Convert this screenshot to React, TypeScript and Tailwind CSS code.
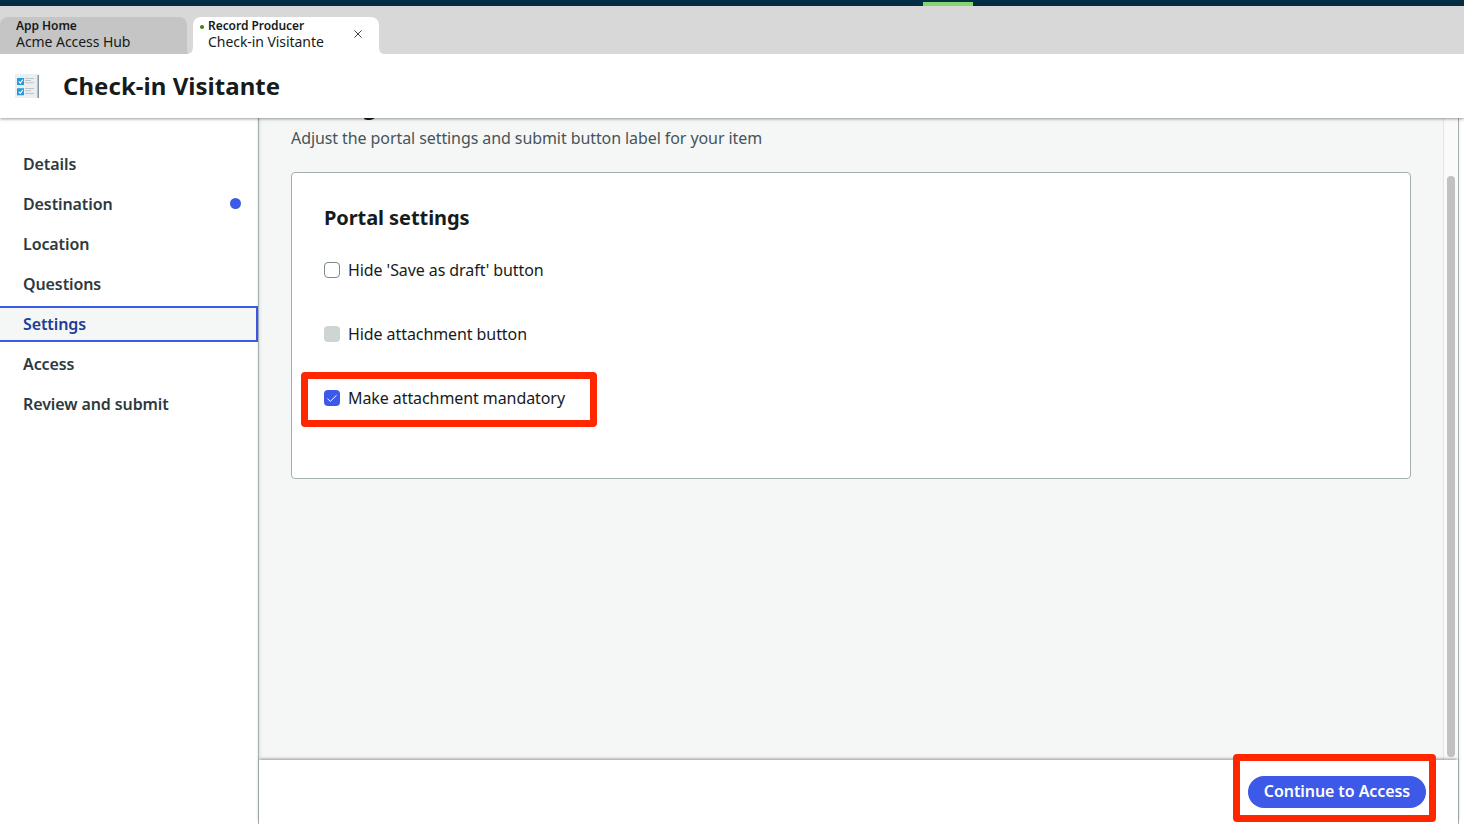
import React from "react";

const steps = ["Details", "Destination", "Location", "Questions", "Settings", "Access", "Review and submit"];

function ChecklistIcon() {
  return (
    <svg className="ml-[15px] h-6 w-6 shrink-0" viewBox="0 0 24 24" fill="none">
      <path d="M22 1h2v23H22z" fill="#8497a2" />
      <path d="M0 0h22v24H0z" fill="#e9eff2" />
      <path d="M22.3 0v24" stroke="#d5dfe4" strokeWidth=".7" />
      <path d="M2 4h7v7H2zM2 14.2h7v7H2z" fill="#209bdc" />
      <path d="M3.7 7.3l1.6 1.8 2.6-3.5M3.7 17.6l1.6 1.8 2.6-3.5" stroke="#fff" strokeWidth="1.1" />
      <path d="M10 4.5h9M10 6.5h6M10 8.8h9M10 14.5h9M10 16.7h6M10 19.5h9" stroke="#bfc4c7" strokeWidth="1.1" />
    </svg>
  );
}

function Option({ label, kind }: { label: string; kind: "empty" | "disabled" | "checked" }) {
  return (
    <label className="flex h-6 items-center gap-2 text-[16px] leading-6 tracking-[-0.08px] text-[#161b1c]">
      {kind === "empty" && <span className="h-4 w-4 rounded-[4px] border border-[#7b898c] bg-white" />}
      {kind === "disabled" && <span className="h-4 w-4 rounded-[4px] bg-[#cfd5d5]" />}
      {kind === "checked" && (
        <span className="h-4 w-4 rounded-[4px] bg-[#3c59e7]">
          <svg viewBox="0 0 16 16" className="h-4 w-4" fill="none" stroke="#fff">
            <path d="M3.4 8.6l2.9 2.8 6.3-6.2" />
          </svg>
        </span>
      )}
      <span>{label}</span>
    </label>
  );
}

export default function App() {
  return (
    <div className="flex h-[834px] w-[1464px] flex-col overflow-hidden bg-white font-['Noto_Sans','Open_Sans',sans-serif] text-[#161b1c]">
      <div className="flex h-1.5 shrink-0 items-end bg-[#032d42] pl-[923px]">
        <div className="h-1 w-[50px] bg-[#81d870]" />
      </div>

      <div className="relative z-20 flex h-12 shrink-0 items-end bg-[#d8d8d8]">
        <div className="h-[37px] w-[187px] rounded-t-lg bg-[#c5c5c5] pl-4">
          <div className="text-[12px] leading-[17px] font-semibold tracking-[-0.05px]">App Home</div>
          <div className="text-[14px] leading-4 tracking-[-0.06px]">Acme Access Hub</div>
        </div>
        <svg className="h-[37px] w-1.5" viewBox="0 0 6 37">
          <path d="M0 37V28Q0 36 1 37z" fill="#c5c5c5" />
          <path d="M6 29Q6 37 0 37h6z" fill="#fff" />
        </svg>
        <div className="flex h-[37px] w-[186px] rounded-t-lg bg-white">
          <span className="mt-2 ml-[7px] h-1 w-1 rounded-full bg-[#3b8500]" />
          <div className="ml-1 w-[146px]">
            <div className="text-[12px] leading-[17px] font-semibold tracking-[-0.05px]">Record Producer</div>
            <div className="text-[14px] leading-4 tracking-[-0.06px]">Check-in Visitante</div>
          </div>
          <svg className="mt-[13px] h-2 w-2" viewBox="0 0 8 8" stroke="#36454a" strokeWidth="1">
            <path d="M.4.4l7.2 7.2M7.6.4L.4 7.6" />
          </svg>
        </div>
        <svg className="h-[37px] w-1.5" viewBox="0 0 6 37">
          <path d="M0 30Q0 37 5 37H0z" fill="#fff" />
        </svg>
      </div>

      <header className="relative z-10 flex h-16 shrink-0 items-center gap-6 bg-white shadow-[0_1px_3px_rgba(0,0,0,0.4)]">
        <ChecklistIcon />
        <h1 className="text-[24px] leading-8 font-bold tracking-[0.04px]">Check-in Visitante</h1>
      </header>

      <div className="flex h-[706px] shrink-0">
        <nav className="flex w-[258px] shrink-0 flex-col gap-1 pt-7">
          {steps.map((name) => (
            <div
              key={name}
              className={
                name === "Settings"
                  ? "flex h-9 items-center justify-between border-y-2 border-r-2 border-[#3c59e7] bg-[#f5f7f7] pl-[23px] text-[16px] font-semibold tracking-[-0.1px] text-[#223c95]"
                  : "flex h-9 items-center justify-between pr-[17px] pl-[23px] text-[16px] font-semibold tracking-[-0.1px] text-[#2e3a3d]"
              }
            >
              <span>{name}</span>
              {name === "Destination" && <span className="mb-px h-[11px] w-[11px] rounded-full bg-[#3c59e7]" />}
            </div>
          ))}
        </nav>

        <div className="flex w-[1201px] flex-col border-x border-[#a4afb1] shadow-[0_-3px_4px_-1px_rgba(0,0,0,0.15)]">
          <div className="flex h-[642px] shrink-0 overflow-hidden">
            <main className="flex w-[1184px] flex-col bg-[#f5f7f7] pl-8 shadow-[inset_3px_0_3px_-2px_rgba(0,0,0,0.1)]">
              <h2 className="-mt-8 h-10 text-[24px] leading-[38px] font-bold">Settings</h2>
              <p className="text-[16px] leading-6 tracking-[-0.085px] text-[#475457]">
                Adjust the portal settings and submit button label for your item
              </p>
              <section className="mt-[22px] h-[307px] w-[1120px] rounded border border-[#a4afb1] bg-white px-8 pt-[29px]">
                <h3 className="text-[20px] leading-8 font-bold tracking-[-0.08px]">Portal settings</h3>
                <div className="mt-6 flex flex-col gap-10">
                  <Option label="Hide 'Save as draft' button" kind="empty" />
                  <Option label="Hide attachment button" kind="disabled" />
                  <div className="relative">
                    <Option label="Make attachment mandatory" kind="checked" />
                    <div className="absolute -top-[14.5px] -left-[23px] h-[55px] w-[296px] rounded-[4px] border-[7px] border-[#ff2600]" />
                  </div>
                </div>
              </section>
            </main>
            <div className="w-[15px] border-l border-[#e3e4e4] bg-[#fafafa] pt-[58px] pl-[3px]">
              <div className="h-[581px] w-2 rounded-full bg-[#c1c1c1]" />
            </div>
          </div>
          <footer className="flex h-16 shrink-0 items-center justify-end bg-white pr-8 shadow-[0_-2px_3px_-1px_rgba(0,0,0,0.4)]">
            <div className="relative">
              <button className="block h-8 w-[178px] rounded-full bg-[#3c59e7] pb-0.5 text-[16px] leading-[30px] font-semibold tracking-[-0.08px] text-white">
                Continue to Access
              </button>
              <div className="absolute -top-[22px] -left-[15px] h-[68px] w-[203px] rounded-[4px] border-[7px] border-[#ff2600]" />
            </div>
          </footer>
        </div>
      </div>
    </div>
  );
}
